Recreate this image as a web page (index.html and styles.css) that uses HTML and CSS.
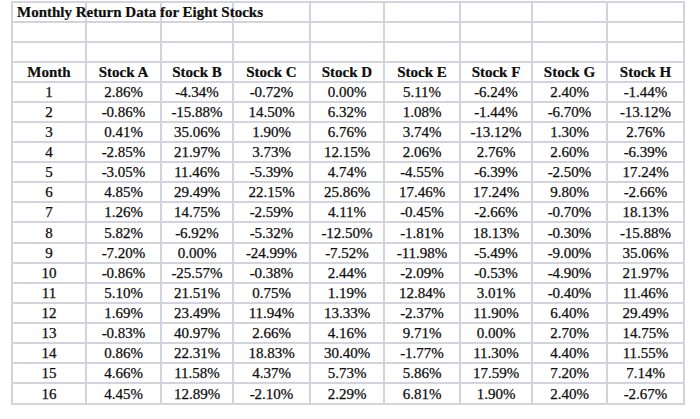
FILE: index.html
```html
<!DOCTYPE html>
<html>
<head>
<meta charset="utf-8">
<link rel="stylesheet" href="styles.css">
</head>
<body>
<table class="sheet">
  <colgroup>
    <col class="c1"><col class="c2"><col class="c3"><col class="c4"><col class="c5"><col class="c6"><col class="c7"><col class="c8"><col class="c9">
  </colgroup>
  <tr class="title-row"><td class="title-cell"><span class="title">Monthly Return Data for Eight Stocks</span></td><td></td><td></td><td></td><td></td><td></td><td></td><td></td><td></td></tr>
  <tr><td></td><td></td><td></td><td></td><td></td><td></td><td></td><td></td><td></td></tr>
  <tr><td></td><td></td><td></td><td></td><td></td><td></td><td></td><td></td><td></td></tr>
  <tr class="head"><td>Month</td><td>Stock A</td><td>Stock B</td><td>Stock C</td><td>Stock D</td><td>Stock E</td><td>Stock F</td><td>Stock G</td><td>Stock H</td></tr>
  <tr><td>1</td><td>2.86%</td><td>-4.34%</td><td>-0.72%</td><td>0.00%</td><td>5.11%</td><td>-6.24%</td><td>2.40%</td><td>-1.44%</td></tr>
  <tr><td>2</td><td>-0.86%</td><td>-15.88%</td><td>14.50%</td><td>6.32%</td><td>1.08%</td><td>-1.44%</td><td>-6.70%</td><td>-13.12%</td></tr>
  <tr><td>3</td><td>0.41%</td><td>35.06%</td><td>1.90%</td><td>6.76%</td><td>3.74%</td><td>-13.12%</td><td>1.30%</td><td>2.76%</td></tr>
  <tr><td>4</td><td>-2.85%</td><td>21.97%</td><td>3.73%</td><td>12.15%</td><td>2.06%</td><td>2.76%</td><td>2.60%</td><td>-6.39%</td></tr>
  <tr><td>5</td><td>-3.05%</td><td>11.46%</td><td>-5.39%</td><td>4.74%</td><td>-4.55%</td><td>-6.39%</td><td>-2.50%</td><td>17.24%</td></tr>
  <tr><td>6</td><td>4.85%</td><td>29.49%</td><td>22.15%</td><td>25.86%</td><td>17.46%</td><td>17.24%</td><td>9.80%</td><td>-2.66%</td></tr>
  <tr><td>7</td><td>1.26%</td><td>14.75%</td><td>-2.59%</td><td>4.11%</td><td>-0.45%</td><td>-2.66%</td><td>-0.70%</td><td>18.13%</td></tr>
  <tr class="tall"><td>8</td><td>5.82%</td><td>-6.92%</td><td>-5.32%</td><td>-12.50%</td><td>-1.81%</td><td>18.13%</td><td>-0.30%</td><td>-15.88%</td></tr>
  <tr><td>9</td><td>-7.20%</td><td>0.00%</td><td>-24.99%</td><td>-7.52%</td><td>-11.98%</td><td>-5.49%</td><td>-9.00%</td><td>35.06%</td></tr>
  <tr><td>10</td><td>-0.86%</td><td>-25.57%</td><td>-0.38%</td><td>2.44%</td><td>-2.09%</td><td>-0.53%</td><td>-4.90%</td><td>21.97%</td></tr>
  <tr><td>11</td><td>5.10%</td><td>21.51%</td><td>0.75%</td><td>1.19%</td><td>12.84%</td><td>3.01%</td><td>-0.40%</td><td>11.46%</td></tr>
  <tr><td>12</td><td>1.69%</td><td>23.49%</td><td>11.94%</td><td>13.33%</td><td>-2.37%</td><td>11.90%</td><td>6.40%</td><td>29.49%</td></tr>
  <tr><td>13</td><td>-0.83%</td><td>40.97%</td><td>2.66%</td><td>4.16%</td><td>9.71%</td><td>0.00%</td><td>2.70%</td><td>14.75%</td></tr>
  <tr><td>14</td><td>0.86%</td><td>22.31%</td><td>18.83%</td><td>30.40%</td><td>-1.77%</td><td>11.30%</td><td>4.40%</td><td>11.55%</td></tr>
  <tr><td>15</td><td>4.66%</td><td>11.58%</td><td>4.37%</td><td>5.73%</td><td>5.86%</td><td>17.59%</td><td>7.20%</td><td>7.14%</td></tr>
  <tr class="tall"><td>16</td><td>4.45%</td><td>12.89%</td><td>-2.10%</td><td>2.29%</td><td>6.81%</td><td>1.90%</td><td>2.40%</td><td>-2.67%</td></tr>
</table>
</body>
</html>
```
FILE: styles.css
```css
html, body {
  margin: 0;
  padding: 0;
  background: #ffffff;
}
body {
  padding: 1px 0 0 11px;
  font-family: "Liberation Serif", "Times New Roman", serif;
  color: #0d0d0d;
}
.sheet {
  border-collapse: collapse;
  table-layout: fixed;
  width: 672px;
  border: 2px solid #d3d3e0;
}
.sheet td {
  border: 2px solid #d3d3e0;
  height: 20px;
  padding: 0;
  box-sizing: border-box;
  text-align: center;
  vertical-align: middle;
  font-size: 15px;
  line-height: 16px;
  white-space: nowrap;
  -webkit-text-stroke: 0.25px #0d0d0d;
}
.sheet tr.tall td {
  height: 21px;
}
.c1 { width: 74px; }
.c2 { width: 75px; }
.c3 { width: 72px; }
.c4 { width: 77px; }
.c5 { width: 74px; }
.c6 { width: 76px; }
.c7 { width: 72px; }
.c8 { width: 75px; }
.c9 { width: 77px; }
.head td {
  font-weight: bold;
  -webkit-text-stroke: 0.2px #0d0d0d;
}
.title-cell {
  position: relative;
  text-align: left;
}
.title {
  position: absolute;
  left: 4px;
  top: 1px;
  font-weight: bold;
  font-size: 15px;
  line-height: 17px;
  -webkit-text-stroke: 0.2px #0d0d0d;
}
```
